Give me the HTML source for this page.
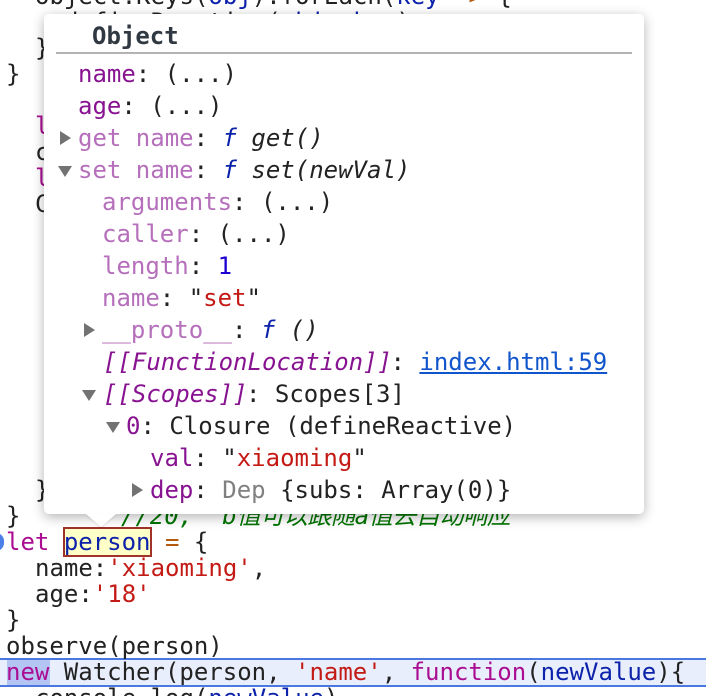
<!DOCTYPE html>
<html><head><meta charset="utf-8"><style>
html,body{margin:0;padding:0;background:#fff}
#r{position:relative;width:706px;height:696px;overflow:hidden;background:#fff;font:24px/26px "DejaVu Sans Mono","Noto Sans CJK SC",monospace;color:#222;filter:blur(.3px)}
.l{position:absolute;white-space:pre;height:26px}
.p{position:absolute;white-space:pre;line-height:32px;height:32px;color:#222}
#pop{position:absolute;left:44px;top:14px;width:600px;height:500px;background:#fff;border-radius:5px;box-shadow:0 3px 12px rgba(0,0,0,.3)}
#pop2{position:absolute;left:0;top:0;width:706px;height:696px}
.n{color:#881391}.d{color:#b56fbb}.b{color:#0d22aa}.s{color:#c41a16}.k{color:#aa0d91}.i{font-style:italic}.g{color:#007400;font-style:italic}.o{color:#b35a10}
.t{position:absolute;width:0;height:0}
.tr{border-left:11px solid #727272;border-top:7px solid transparent;border-bottom:7px solid transparent}
.td{border-top:11px solid #727272;border-left:7px solid transparent;border-right:7px solid transparent}
</style></head><body><div id="r">
<div class="l" style="left:35px;top:-17px">object.Keys(<span class="b">obj</span>).forEach(<span class="b">key</span> <span class="o">=&gt;</span> {</div>
<div class="l" style="left:64px;top:9px">defineReactive(<span class="b">obj</span>, <span class="b">key</span>)</div>
<div class="l" style="left:35px;top:35px">}</div>
<div class="l" style="left:6px;top:61px">}</div>
<div class="l k" style="left:35px;top:113px">let</div>
<div class="l" style="left:35px;top:139px">console</div>
<div class="l k" style="left:35px;top:165px">let</div>
<div class="l" style="left:35px;top:191px">Console</div>
<div class="l" style="left:35px;top:477px">}</div>
<div class="l" style="left:6px;top:503px">}</div>
<div class="l" style="left:121px;top:503px"><span class="g">//20,  b<span style="letter-spacing:-.4px">值可以跟随a值去自动响应</span></span></div>

<div style="position:absolute;left:0;top:658px;width:706px;height:25px;background:#e9eefc;border-top:2px solid #4a78e0;border-bottom:2px solid #4a78e0"></div>
<div style="position:absolute;left:7px;top:660px;width:43px;height:25px;background:#b4c5f4"></div>
<div style="position:absolute;left:63px;top:527px;width:85px;height:26px;background:#ffffc8;border:2px solid #a0322a"></div>
<div style="position:absolute;left:-7px;top:533px;width:11px;height:18px;background:#4a80e8;border-radius:0 8px 8px 0"></div>

<div class="l" style="left:6px;top:529px"><span class="k">let</span> <span class="b">person</span> <span class="o">=</span> {</div>
<div class="l" style="left:35px;top:555px">name:<span class="s">'xiaoming'</span>,</div>
<div class="l" style="left:35px;top:581px">age:<span class="s">'18'</span></div>
<div class="l" style="left:6px;top:607px">}</div>
<div class="l" style="left:6px;top:633px">observe(person)</div>
<div class="l" style="left:6px;top:659px"><span class="k">new</span> Watcher(person, <span class="s">'name'</span>, <span class="k">function</span>(<span class="b">newValue</span>){</div>
<div class="l" style="left:35px;top:685px">console.log(<span class="b">newValue</span>)</div>

<div id="pop"></div>
<div style="position:absolute;left:86px;top:514px;width:0;height:0;border-left:15px solid transparent;border-right:15px solid transparent;border-top:13px solid #fff;filter:drop-shadow(0 1px 1px rgba(0,0,0,.12))"></div>
<div id="pop2">
<div class="p" style="left:92px;top:20px;font-weight:bold;color:#303942">Object</div>
<div style="position:absolute;left:56px;top:52px;width:576px;height:2px;background:#b3b3b3"></div>
<div class="p n" style="left:78px;top:58px">name<span style="color:#222">: (...)</span></div>
<div class="p n" style="left:78px;top:90px">age<span style="color:#222">: (...)</span></div>
<div class="t tr" style="left:60px;top:131px"></div>
<div class="p d" style="left:78px;top:122px">get name<span style="color:#222">: <span class="b i">f</span> <span class="i">get()</span></span></div>
<div class="t td" style="left:58px;top:166px"></div>
<div class="p d" style="left:78px;top:154px">set name<span style="color:#222">: <span class="b i">f</span> <span class="i">set(newVal)</span></span></div>
<div class="p d" style="left:102px;top:186px">arguments<span style="color:#222">: (...)</span></div>
<div class="p d" style="left:102px;top:218px">caller<span style="color:#222">: (...)</span></div>
<div class="p d" style="left:102px;top:250px">length<span style="color:#222">: <span style="color:#1c00cf">1</span></span></div>
<div class="p d" style="left:102px;top:282px">name<span style="color:#222">: "<span class="s">set</span>"</span></div>
<div class="t tr" style="left:84px;top:323px"></div>
<div class="p d" style="left:102px;top:314px">__proto__<span style="color:#222">: <span class="b i">f</span> <span class="i">()</span></span></div>
<div class="p n i" style="left:103px;top:346px">[[FunctionLocation]]<span style="color:#222;font-style:normal;margin-left:-1.5px">: <span style="color:#1155cc;text-decoration:underline">index.html:59</span></span></div>
<div class="t td" style="left:82px;top:390px"></div>
<div class="p n i" style="left:103px;top:378px">[[Scopes]]<span style="color:#222;font-style:normal;margin-left:-1.5px">: Scopes[3]</span></div>
<div class="t td" style="left:106px;top:422px"></div>
<div class="p n" style="left:126px;top:410px">0<span style="color:#222">: Closure (defineReactive)</span></div>
<div class="p n" style="left:150px;top:442px">val<span style="color:#222">: "<span class="s">xiaoming</span>"</span></div>
<div class="t tr" style="left:132px;top:483px"></div>
<div class="p n" style="left:150px;top:474px">dep<span style="color:#222">: <span style="color:#808080">Dep</span> {subs: Array(0)}</span></div>
</div>
</div></body></html>
